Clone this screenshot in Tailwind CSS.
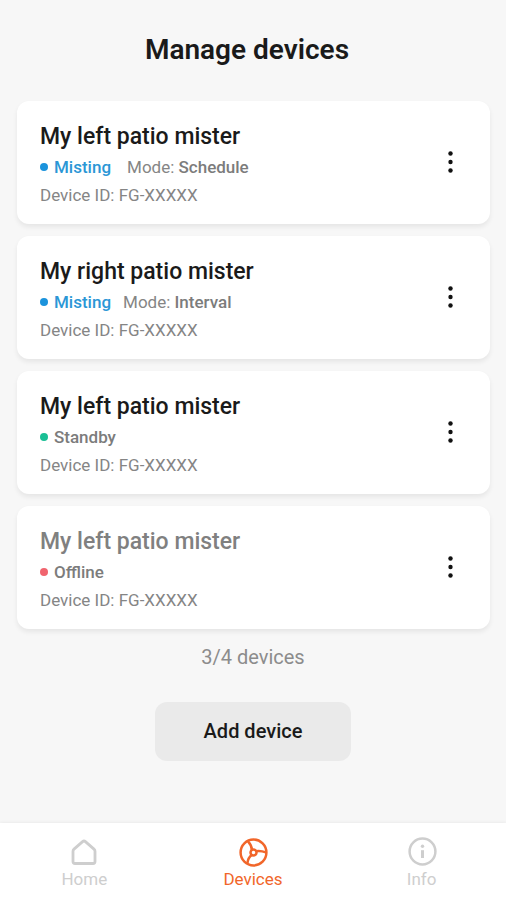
<!DOCTYPE html>
<html lang="en">
<head>
<meta charset="utf-8">
<meta name="viewport" content="width=device-width, initial-scale=1">
<title>Manage devices</title>
<script src="https://cdn.jsdelivr.net/npm/@tailwindcss/browser@4"></script>
</head>
<body class="flex min-h-screen flex-col bg-[#f7f7f7] font-['Roboto',sans-serif] text-[#1a1a1a]">
  <header class="pt-[30px] pr-3 pb-[31px]">
    <h1 class="text-center text-[28px] leading-10 font-semibold">Manage devices</h1>
  </header>

  <main class="flex flex-1 flex-col items-center px-4">
    <ul class="flex w-full flex-col gap-3 pl-px text-[17px] leading-7 text-[#858585]">
      <li class="flex items-center justify-between rounded-xl bg-white pt-5 pr-5 pb-[15px] pl-[23px] shadow-[0_3px_5px_rgba(0,0,0,0.07)]">
        <div>
          <h2 class="text-[23px] leading-8 font-medium text-[#1a1a1a]">My left patio mister</h2>
          <p class="flex items-center"><span class="mr-1.5 size-2 rounded-full bg-[#1b93dc]"></span><span class="font-medium text-[#2b97d6]">Misting</span><span class="ml-4">Mode: <span class="font-medium text-[#7c7c7c]">Schedule</span></span></p>
          <p>Device ID: FG-XXXXX</p>
        </div>
        <button type="button" aria-label="Device options" class="-mt-1.5 flex size-10 items-center justify-center"><svg class="h-6 w-2" viewBox="0 0 8 24" fill="#111" aria-hidden="true"><circle cx="4.5" cy="3.5" r="2.2"/><circle cx="4.5" cy="12" r="2.2"/><circle cx="4.5" cy="20.5" r="2.2"/></svg></button>
      </li>
      <li class="flex items-center justify-between rounded-xl bg-white pt-5 pr-5 pb-[15px] pl-[23px] shadow-[0_3px_5px_rgba(0,0,0,0.07)]">
        <div>
          <h2 class="text-[23px] leading-8 font-medium text-[#1a1a1a]">My right patio mister</h2>
          <p class="flex items-center"><span class="mr-1.5 size-2 rounded-full bg-[#1b93dc]"></span><span class="font-medium text-[#2b97d6]">Misting</span><span class="ml-3">Mode: <span class="font-medium text-[#7c7c7c]">Interval</span></span></p>
          <p>Device ID: FG-XXXXX</p>
        </div>
        <button type="button" aria-label="Device options" class="-mt-1.5 flex size-10 items-center justify-center"><svg class="h-6 w-2" viewBox="0 0 8 24" fill="#111" aria-hidden="true"><circle cx="4.5" cy="3.5" r="2.2"/><circle cx="4.5" cy="12" r="2.2"/><circle cx="4.5" cy="20.5" r="2.2"/></svg></button>
      </li>
      <li class="flex items-center justify-between rounded-xl bg-white pt-5 pr-5 pb-[15px] pl-[23px] shadow-[0_3px_5px_rgba(0,0,0,0.07)]">
        <div>
          <h2 class="text-[23px] leading-8 font-medium text-[#1a1a1a]">My left patio mister</h2>
          <p class="flex items-center"><span class="mr-1.5 size-2 rounded-full bg-[#1abf95]"></span><span class="font-medium text-[#7c7c7c]">Standby</span></p>
          <p>Device ID: FG-XXXXX</p>
        </div>
        <button type="button" aria-label="Device options" class="-mt-1.5 flex size-10 items-center justify-center"><svg class="h-6 w-2" viewBox="0 0 8 24" fill="#111" aria-hidden="true"><circle cx="4.5" cy="3.5" r="2.2"/><circle cx="4.5" cy="12" r="2.2"/><circle cx="4.5" cy="20.5" r="2.2"/></svg></button>
      </li>
      <li class="flex items-center justify-between rounded-xl bg-white pt-5 pr-5 pb-[15px] pl-[23px] shadow-[0_3px_5px_rgba(0,0,0,0.07)]">
        <div>
          <h2 class="text-[23px] leading-8 font-medium text-[#808080]">My left patio mister</h2>
          <p class="flex items-center"><span class="mr-1.5 size-2 rounded-full bg-[#f0646e]"></span><span class="font-medium text-[#7c7c7c]">Offline</span></p>
          <p>Device ID: FG-XXXXX</p>
        </div>
        <button type="button" aria-label="Device options" class="-mt-1.5 flex size-10 items-center justify-center"><svg class="h-6 w-2" viewBox="0 0 8 24" fill="#111" aria-hidden="true"><circle cx="4.5" cy="3.5" r="2.2"/><circle cx="4.5" cy="12" r="2.2"/><circle cx="4.5" cy="20.5" r="2.2"/></svg></button>
      </li>
    </ul>
    <p class="mt-3.5 text-xl leading-7 text-[#8c8c8c]">3/4 devices</p>
    <button type="button" class="mt-[31px] mb-8 rounded-xl bg-[#eaeaea] px-[49px] py-4 text-xl leading-[27px] font-medium">Add device</button>
  </main>

  <nav class="grid grid-cols-3 bg-white pt-3.5 pb-[11px] text-[17px] leading-5 text-[#cecece] shadow-[0_-1px_3px_rgba(0,0,0,0.05)]">
    <a href="#home" class="flex flex-col items-center">
      <svg class="size-8" viewBox="0 0 32 32" fill="none" stroke="currentColor" stroke-width="2.8" stroke-linejoin="round" aria-hidden="true"><path d="M5 14.2Q5 13 6 12.1L14.6 4.6Q16 3.4 17.4 4.6L26 12.1Q27 13 27 14.2V24.5Q27 26.5 25 26.5H7Q5 26.5 5 24.5Z"/></svg>
      Home
    </a>
    <a href="#devices" aria-current="page" class="flex flex-col items-center text-[#f1662a]">
      <svg class="size-8" viewBox="0 0 32 32" fill="none" stroke="currentColor" stroke-width="2.5" aria-hidden="true"><circle cx="16.5" cy="15.5" r="12.9"/><circle cx="16.5" cy="15.5" r="3"/><path d="M19 14.2Q23.5 13.4 29 15.4M14.9 13Q14.9 8.5 11 4.3M14.9 18Q11 20.4 10.4 26.3"/></svg>
      Devices
    </a>
    <a href="#info" class="flex flex-col items-center">
      <svg class="size-8" viewBox="0 0 32 32" fill="none" stroke="currentColor" stroke-width="2.5" aria-hidden="true"><circle cx="16.5" cy="14.5" r="12.9"/><path d="M16.5 13.2V21" stroke-width="3"/><circle cx="16.5" cy="9.3" r="1.7" fill="currentColor" stroke="none"/></svg>
      Info
    </a>
  </nav>
</body>
</html>
